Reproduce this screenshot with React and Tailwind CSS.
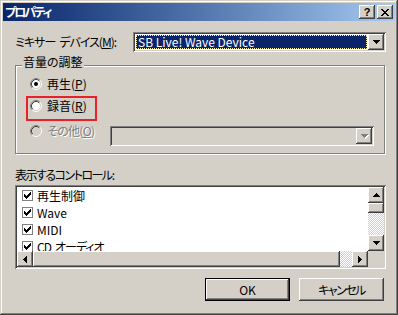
import React from "react";

const Pix = ({ rows, color = "#000" }) => {
  const h = rows.length;
  const w = rows[0].length;
  return (
    <svg width={w} height={h} shapeRendering="crispEdges" className="block">
      {rows.flatMap((r, y) =>
        [...r].map((c, x) =>
          c === "X" ? <rect key={x + "-" + y} x={x} y={y} width="1" height="1" fill={color} /> : null
        )
      )}
    </svg>
  );
};

const UP = ["...X...", "..XXX..", ".XXXXX.", "XXXXXXX"];
const DOWN = ["XXXXXXX", ".XXXXX.", "..XXX..", "...X..."];
const LEFT = ["...X", "..XX", ".XXX", "XXXX", ".XXX", "..XX", "...X"];
const RIGHT = ["X...", "XX..", "XXX.", "XXXX", "XXX.", "XX..", "X..."];
const CLOSE = ["XX....XX", ".XX..XX.", "..XXXX..", "...XX...", "..XXXX..", ".XX..XX.", "XX....XX"];
const CHECK = ["......X", ".....XX", "X...XXX", "XX.XXX.", "XXXXX..", ".XXX...", "..X...."];

const Radio = ({ checked, disabled }) => (
  <svg width="12" height="12" className="block shrink-0">
    <circle cx="6" cy="6" r="4.5" fill={disabled ? "#d4d0c8" : "#fff"} />
    <path d="M2.11 9.89 A5.5 5.5 0 0 1 9.89 2.11" stroke="#808080" fill="none" />
    <path d="M9.89 2.11 A5.5 5.5 0 0 1 2.11 9.89" stroke="#fff" fill="none" />
    <path d="M2.82 9.18 A4.5 4.5 0 0 1 9.18 2.82" stroke="#404040" fill="none" />
    <path d="M9.18 2.82 A4.5 4.5 0 0 1 2.82 9.18" stroke="#d4d0c8" fill="none" />
    {checked && <circle cx="6" cy="6" r="2" fill="#000" />}
  </svg>
);

const Check = () => (
  <div className="w-[11px] h-[11px] border border-[#808080] bg-white flex items-center justify-center shrink-0">
    <Pix rows={CHECK} />
  </div>
);

const RAISED =
  "bg-[#d4d0c8] shadow-[inset_-1px_-1px_#404040,inset_1px_1px_#ffffff,inset_-2px_-2px_#808080,inset_2px_2px_#d4d0c8]";
const SUNKEN =
  "shadow-[inset_1px_1px_#808080,inset_-1px_-1px_#ffffff,inset_2px_2px_#404040,inset_-2px_-2px_#d4d0c8]";

const ArrowBtn = ({ rows, color = "#000", className = "" }) => (
  <div className={"flex items-center justify-center shrink-0 " + RAISED + " " + className}>
    <Pix rows={rows} color={color} />
  </div>
);

const Sp = () => <span className="inline-block w-[4px]"> </span>;

export default function App() {
  return (
    <div className="w-[398px] h-[315px] bg-[#d4d0c8] p-[3px] flex flex-col shadow-[inset_-1px_-1px_#404040,inset_1px_1px_#d4d0c8,inset_-2px_-2px_#808080,inset_2px_2px_#ffffff] font-['Noto_Sans_CJK_JP',sans-serif] [font-feature-settings:'palt'] text-[12px] leading-[16px] text-black select-none">
      {/* Title bar */}
      <div className="h-[18px] flex items-center bg-gradient-to-r from-[#0a246a] to-[#a6caf0] pl-[2px] pr-[2px]">
        <div className="flex-1 text-white font-bold leading-[18px] tracking-[-2px]">プロパティ</div>
        <div className={"w-[16px] h-[14px] flex items-center justify-center " + RAISED}>
          <span className="font-['Liberation_Sans',sans-serif] font-bold text-[11px] leading-none mt-[1px]">?</span>
        </div>
        <div className={"w-[16px] h-[14px] ml-[2px] flex items-center justify-center " + RAISED}>
          <Pix rows={CLOSE} />
        </div>
      </div>

      {/* Client */}
      <div className="flex-1 flex flex-col pl-[12px] pr-[9px] pt-[11px]">
        {/* Mixer device row */}
        <div className="flex items-center h-[20px]">
          <div className="w-[118px] shrink-0 tracking-[-1px] whitespace-nowrap">
            ミキサー<Sp />デバイス(<u>M</u>):
          </div>
          <div className={"flex-1 h-[20px] bg-white p-[2px] flex " + SUNKEN}>
            <div className="flex-1 m-[1px] bg-[#0a246a] text-white border border-dotted border-[#f0e8a8] pl-[1px] leading-[12px] flex items-center">
              SB Live! Wave Device
            </div>
            <ArrowBtn rows={DOWN} className="w-[16px] h-[16px]" />
          </div>
        </div>

        {/* Group box */}
        <div className="mt-[13px] w-[370px] h-[89px] border border-[#808080] shadow-[1px_1px_#ffffff,inset_1px_1px_#ffffff] relative pl-[14px] pt-[10px] flex flex-col">
          <div className="absolute left-[6px] -top-[12px] px-[1px] bg-[#d4d0c8]">音量の調整</div>

          <div className="h-[16px] flex items-center gap-[5px]">
            <Radio checked />
            <span>
              再生(<u>P</u>)
            </span>
          </div>
          <div className="h-[16px] mt-[6px] flex items-center gap-[5px]">
            <Radio />
            <span>
              録音(<u>R</u>)
            </span>
          </div>
          <div className="mt-[9px] flex items-start">
            <div className="w-[80px] h-[16px] flex items-center gap-[5px] shrink-0">
              <Radio disabled />
              <span className="text-[#808080] [text-shadow:1px_1px_0_#ffffff] tracking-[-0.7px]">
                その他(<u>O</u>)
              </span>
            </div>
            <div className={"mt-[3px] w-[264px] h-[20px] bg-[#d4d0c8] p-[2px] flex justify-end " + SUNKEN}>
              <div className={"w-[16px] h-[16px] flex items-center justify-center " + RAISED}>
                <div className="relative">
                  <div className="absolute left-[1px] top-[1px]">
                    <Pix rows={DOWN} color="#ffffff" />
                  </div>
                  <div className="relative">
                    <Pix rows={DOWN} color="#808080" />
                  </div>
                </div>
              </div>
            </div>
          </div>

          {/* annotation rectangle */}
          <div className="absolute left-[10px] top-[30px] w-[71px] h-[25px] border-2 border-[#e8202a] pointer-events-none" />
        </div>

        {/* Controls label */}
        <div className="mt-[13px] h-[16px] tracking-[-1.5px]">表示するコントロール:</div>

        {/* List box */}
        <div className={"mt-[2px] h-[84px] w-[371px] p-[2px] flex flex-col bg-white " + SUNKEN}>
          <div className="flex-1 flex min-h-0">
            <div className="flex-1 bg-white overflow-hidden">
              <div className="h-[17px] flex items-center pl-[5px] gap-[4px]">
                <Check />
                <span>再生制御</span>
              </div>
              <div className="h-[17px] flex items-center pl-[5px] gap-[4px]">
                <Check />
                <span>Wave</span>
              </div>
              <div className="h-[17px] flex items-center pl-[5px] gap-[4px]">
                <Check />
                <span>MIDI</span>
              </div>
              <div className="h-[17px] flex items-center pl-[5px] gap-[4px]">
                <Check />
                <span className="tracking-[-1px] whitespace-nowrap">
                  CD<Sp />オーディオ
                </span>
              </div>
            </div>
            <div className="w-[16px] flex flex-col">
              <ArrowBtn rows={UP} className="h-[16px]" />
              <div className={"h-[10px] shrink-0 " + RAISED} />
              <div className="flex-1 bg-[conic-gradient(#ffffff_25%,#d4d0c8_0_50%,#ffffff_0_75%,#d4d0c8_0)] bg-[length:2px_2px]" />
              <ArrowBtn rows={DOWN} className="h-[16px]" />
            </div>
          </div>
          <div className="h-[16px] flex shrink-0">
            <ArrowBtn rows={LEFT} className="w-[16px] h-[16px]" />
            <div className={"w-[307px] h-[16px] shrink-0 " + RAISED} />
            <div className="flex-1 bg-[conic-gradient(#ffffff_25%,#d4d0c8_0_50%,#ffffff_0_75%,#d4d0c8_0)] bg-[length:2px_2px]" />
            <ArrowBtn rows={RIGHT} className="w-[16px] h-[16px]" />
            <div className="w-[16px] h-[16px] bg-[#d4d0c8]" />
          </div>
        </div>

        {/* Buttons */}
        <div className="mt-[9px] flex justify-end gap-[9px] pr-[2px]">
          <div className="w-[85px] h-[23px] border border-black">
            <div className={"w-full h-full flex items-center justify-center " + RAISED}>OK</div>
          </div>
          <div className={"w-[85px] h-[23px] flex items-center justify-center tracking-[-1.5px] " + RAISED}>キャンセル</div>
        </div>
      </div>
    </div>
  );
}
